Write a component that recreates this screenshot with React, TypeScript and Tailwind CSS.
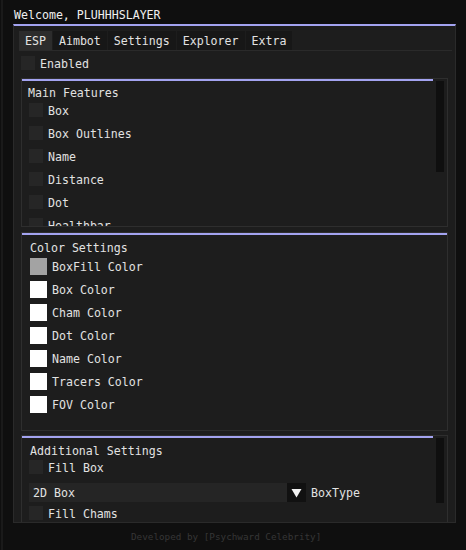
import React from "react";

const BLUE = "#a3a3f0";

function Check({ label }: { label: string }) {
  return (
    <div className="flex items-center gap-[5px] h-[14px]">
      <div className="w-[14px] h-[14px] bg-[#262626] shrink-0" />
      <span className="leading-[13px] pt-[2px]">{label}</span>
    </div>
  );
}

function Swatch({ label, color }: { label: string; color: string }) {
  return (
    <div className="flex items-center gap-[5px] h-[17px]">
      <div className="w-[17px] h-[17px] shrink-0" style={{ backgroundColor: color }} />
      <span className="leading-[13px] pt-[2px]">{label}</span>
    </div>
  );
}

export default function App() {
  const tabs = ["ESP", "Aimbot", "Settings", "Explorer", "Extra"];
  const mainItems = ["Box", "Box Outlines", "Name", "Distance", "Dot", "Healthbar"];
  const colors: [string, string][] = [
    ["BoxFill Color", "#a3a3a3"],
    ["Box Color", "#ffffff"],
    ["Cham Color", "#ffffff"],
    ["Dot Color", "#ffffff"],
    ["Name Color", "#ffffff"],
    ["Tracers Color", "#ffffff"],
    ["FOV Color", "#ffffff"],
  ];
  return (
    <div
      className="w-[466px] h-[550px] bg-[#0f0f0f] text-[#e2e2e2] text-[11.6px] flex flex-col overflow-hidden"
      style={{ fontFamily: '"DejaVu Sans Mono", "Liberation Mono", monospace' }}
    >
      <div className="flex h-[550px]">
        <div className="w-[1px] shrink-0" />
        <div className="w-[2px] shrink-0 bg-[#1a1a1a]" />
        <div className="flex flex-col flex-1">
          <div className="h-[24px] pl-[11px] pt-[8px] leading-[14px] text-[#f0f0f0]">
            Welcome, PLUHHHSLAYER
          </div>
          <div
            className="ml-[10px] w-[443px] h-[499px] border border-[#2a2a2a] bg-[#1d1d1d] overflow-hidden flex flex-col"
            style={{ borderTop: `2px solid ${BLUE}` }}
          >
            <div className="mt-[5px] ml-[5px] w-[433px] flex gap-[1px] border-b border-[#2a2a2a] shrink-0">
              {tabs.map((t, i) => (
                <div
                  key={t}
                  className={
                    "h-[19px] px-[6px] pt-[2px] leading-[17px] " +
                    (i === 0 ? "bg-[#2c2c2c]" : "bg-[#171717]")
                  }
                >
                  {t}
                </div>
              ))}
            </div>
            <div className="mt-[5px] ml-[7px] shrink-0">
              <Check label="Enabled" />
            </div>

            <div className="mt-[8px] ml-[7px] w-[427px] h-[149px] shrink-0 border border-[#2e2e2e] flex overflow-hidden">
              <div className="flex-1 flex flex-col">
                <div className="h-[2px] shrink-0" style={{ backgroundColor: BLUE }} />
                <div className="pl-[6px] mt-[6px] leading-[13px]">Main Features</div>
                <div className="mt-[3px] pl-[7px] flex flex-col gap-[9px]">
                  {mainItems.map((m) => (
                    <Check key={m} label={m} />
                  ))}
                </div>
              </div>
              <div className="w-[14px] shrink-0 pt-[2px] pl-[3px]">
                <div className="w-[8px] h-[91px] bg-[#0f0f0f]" />
              </div>
            </div>

            <div className="mt-[5px] ml-[7px] w-[427px] h-[199px] shrink-0 border border-[#2e2e2e] flex flex-col overflow-hidden">
              <div className="h-[2px] shrink-0" style={{ backgroundColor: BLUE }} />
              <div className="pl-[8px] mt-[7px] leading-[13px]">Color Settings</div>
              <div className="mt-[3px] pl-[8px] flex flex-col gap-[6px]">
                {colors.map(([l, c]) => (
                  <Swatch key={l} label={l} color={c} />
                ))}
              </div>
            </div>

            <div className="mt-[4px] ml-[7px] w-[427px] h-[130px] shrink-0 border border-[#2e2e2e] flex">
              <div className="flex-1 flex flex-col">
                <div className="h-[2px] shrink-0" style={{ backgroundColor: BLUE }} />
                <div className="pl-[8px] mt-[7px] leading-[13px]">Additional Settings</div>
                <div className="mt-[2px] pl-[7px]">
                  <Check label="Fill Box" />
                </div>
                <div className="mt-[9px] pl-[7px] flex items-center h-[19px]">
                  <div className="w-[258px] h-[19px] bg-[#252525] pl-[4px] pt-[2px] leading-[17px]">2D Box</div>
                  <div className="w-[19px] h-[19px] bg-[#111111] flex items-center justify-center">
                    <svg width="11" height="10" viewBox="0 0 11 10">
                      <polygon points="0.5,1 10.5,1 5.5,9.5" fill="#f2f2f2" />
                    </svg>
                  </div>
                  <span className="ml-[5px] leading-[13px] pt-[2px]">BoxType</span>
                </div>
                <div className="mt-[4px] pl-[7px]">
                  <Check label="Fill Chams" />
                </div>
              </div>
              <div className="w-[14px] shrink-0 pt-[2px] pl-[3px]">
                <div className="w-[8px] h-[65px] bg-[#0f0f0f]" />
              </div>
            </div>
          </div>
          <div className="pl-[128px] pt-[8px] leading-[12px] text-[9.3px] text-[#363636]">
            Developed by [Psychward Celebrity]
          </div>
        </div>
      </div>
    </div>
  );
}
